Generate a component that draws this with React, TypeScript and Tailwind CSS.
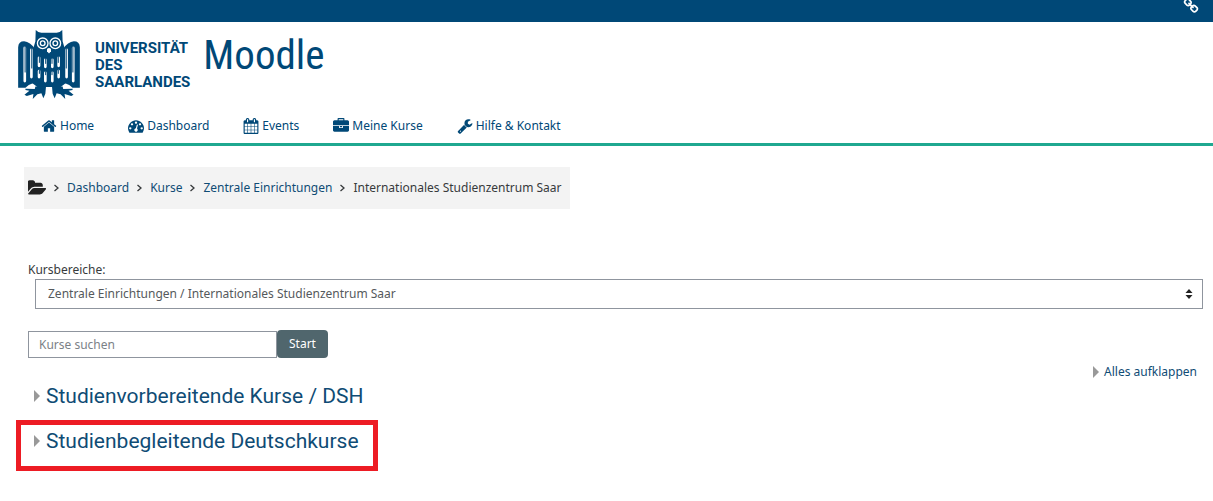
import { useState } from 'react';

const icons = {
  home: 'M1472 992v480q0 26-19 45t-45 19h-384v-384h-256v384h-384q-26 0-45-19t-19-45v-480q0-1 .5-3t.5-3l575-474 575 474q1 2 1 6zm223-69l-62 74q-8 9-21 11h-3q-13 0-21-7l-692-577-692 577q-12 8-24 7-13-2-21-11l-62-74q-8-10-7-23.5t11-21.5l719-599q32-26 76-26t76 26l244 204v-195q0-14 9-23t23-9h192q14 0 23 9t9 23v408l219 182q10 8 11 21.5t-7 23.5z',
  dashboard:
    'M384 1152q0-53-37.5-90.5t-90.5-37.5-90.5 37.5-37.5 90.5 37.5 90.5 90.5 37.5 90.5-37.5 37.5-90.5zm192-448q0-53-37.5-90.5t-90.5-37.5-90.5 37.5-37.5 90.5 37.5 90.5 90.5 37.5 90.5-37.5 37.5-90.5zm428 481l101-382q6-26-7.5-48.5t-38.5-29.5-48 6.5-30 39.5l-101 382q-60 5-107 43.5t-63 98.5q-20 77 20 146t117 89 146-20 89-117q16-60-6-117t-72-91zm660-33q0-53-37.5-90.5t-90.5-37.5-90.5 37.5-37.5 90.5 37.5 90.5 90.5 37.5 90.5-37.5 37.5-90.5zm-640-640q0-53-37.5-90.5t-90.5-37.5-90.5 37.5-37.5 90.5 37.5 90.5 90.5 37.5 90.5-37.5 37.5-90.5zm448 192q0-53-37.5-90.5t-90.5-37.5-90.5 37.5-37.5 90.5 37.5 90.5 90.5 37.5 90.5-37.5 37.5-90.5zm320 448q0 261-141 483-19 29-54 29h-1402q-35 0-54-29-141-221-141-483 0-182 71-348t191-286 286-191 348-71 348 71 286 191 191 286 71 348z',
  calendar:
    'M192 1664h288v-288h-288v288zm352 0h320v-288h-320v288zm-352-352h288v-320h-288v320zm352 0h320v-320h-320v320zm-352-384h288v-288h-288v288zm736 736h320v-288h-320v288zm-384-736h320v-288h-320v288zm768 736h288v-288h-288v288zm-384-352h320v-320h-320v320zm-352-864v-288q0-13-9.5-22.5t-22.5-9.5h-64q-13 0-22.5 9.5t-9.5 22.5v288q0 13 9.5 22.5t22.5 9.5h64q13 0 22.5-9.5t9.5-22.5zm736 864h288v-320h-288v320zm-384-384h320v-288h-320v288zm384 0h288v-288h-288v288zm32-480v-288q0-13-9.5-22.5t-22.5-9.5h-64q-13 0-22.5 9.5t-9.5 22.5v288q0 13 9.5 22.5t22.5 9.5h64q13 0 22.5-9.5t9.5-22.5zm384-64v1280q0 52-38 90t-90 38h-1408q-52 0-90-38t-38-90v-1280q0-52 38-90t90-38h128v-96q0-66 47-113t113-47h64q66 0 113 47t47 113v96h384v-96q0-66 47-113t113-47h64q66 0 113 47t47 113v96h128q52 0 90 38t38 90z',
  briefcase:
    'M640 256h512v-128h-512v128zm1152 640v480q0 66-47 113t-113 47h-1472q-66 0-113-47t-47-113v-480h672v160q0 26 19 45t45 19h320q26 0 45-19t19-45v-160h672zm-768 0v128h-256v-128h256zm768-480v384h-1792v-384q0-66 47-113t113-47h352v-160q0-40 28-68t68-28h576q40 0 68 28t28 68v160h352q66 0 113 47t47 113z',
  wrench:
    'M448 1472q0-26-19-45t-45-19-45 19-19 45 19 45 45 19 45-19 19-45zm644-420l-682 682q-37 37-90 37-52 0-91-37l-106-108q-38-36-38-90 0-53 38-91l681-681q39 98 114.5 173.5t173.5 114.5zm634-435q0 39-23 106-47 134-164.5 217.5t-258.5 83.5q-185 0-316.5-131.5t-131.5-316.5 131.5-316.5 316.5-131.5q58 0 121.5 16.5t107.5 46.5q16 11 16 28t-16 28l-293 169v224l193 107q5-3 79-48.5t135.5-81 70.5-35.5q15 0 23.5 10t8.5 25z',
  folder:
    'M1815 952q0 31-31 66l-336 396q-43 51-120.5 86.5t-143.5 35.5h-1088q-34 0-60.5-13t-26.5-43q0-31 31-66l336-396q43-51 120.5-86.5t143.5-35.5h1088q34 0 60.5 13t26.5 43zm-343-344v160h-832q-94 0-197 47.5t-164 119.5l-337 396-5 6q0-4-.5-12.5t-.5-12.5v-960q0-92 66-158t158-66h320q92 0 158 66t66 158v32h544q92 0 158 66t66 158z',
  link: 'M1520 1216q0-40-28-68l-208-208q-28-28-68-28-42 0-72 32 3 3 19 18.5t21.5 21.5 15 19 13 25.5 3.5 27.5q0 40-28 68t-68 28q-15 0-27.5-3.5t-25.5-13-19-15-21.5-21.5-18.5-19q-33 31-33 73 0 40 28 68l206 207q27 27 68 27 40 0 68-26l147-146q28-28 28-67zm-703-705q0-40-28-68l-206-207q-28-28-68-28-39 0-68 27l-147 146q-28 28-28 67 0 40 28 68l208 208q27 27 68 27 42 0 72-31-3-3-19-18.5t-21.5-21.5-15-19-13-25.5-3.5-27.5q0-40 28-68t68-28q15 0 27.5 3.5t25.5 13 19 15 21.5 21.5 18.5 19q33-31 33-73zm895 705q0 120-85 203l-147 146q-83 83-203 83-121 0-204-85l-206-207q-83-83-83-203 0-123 88-209l-88-88q-86 88-208 88-120 0-204-84l-208-208q-84-84-84-204t85-203l147-146q83-83 203-83 121 0 204 85l206 207q83 83 83 203 0 123-88 209l88 88q86-88 208-88 120 0 204 84l208 208q84 84 84 204z',
};

type IconName = keyof typeof icons;

const navItems: { label: string; icon: IconName }[] = [
  { label: 'Home', icon: 'home' },
  { label: 'Dashboard', icon: 'dashboard' },
  { label: 'Events', icon: 'calendar' },
  { label: 'Meine Kurse', icon: 'briefcase' },
  { label: 'Hilfe & Kontakt', icon: 'wrench' },
];

const breadcrumbs = ['Dashboard', 'Kurse', 'Zentrale Einrichtungen'];

const categories = [
  { name: 'Studienvorbereitende Kurse / DSH', highlighted: false },
  { name: 'Studienbegleitende Deutschkurse', highlighted: true },
];

function Icon({ name, className }: { name: IconName; className: string }) {
  return (
    <svg viewBox="0 0 1792 1792" fill="currentColor" aria-hidden="true" className={className}>
      <path d={icons[name]} />
    </svg>
  );
}

function Triangle({ className }: { className: string }) {
  return (
    <svg viewBox="0 0 6 12" fill="currentColor" aria-hidden="true" className={className}>
      <path d="M0 0L6 6L0 12z" />
    </svg>
  );
}

function Chevron() {
  return (
    <svg viewBox="0 0 5 8" fill="none" stroke="currentColor" strokeWidth="1.3" aria-hidden="true" className="h-2 w-[5px] text-[#373a3c]">
      <path d="M.5 1L4 4L.5 7" />
    </svg>
  );
}

function Owl() {
  return (
    <svg viewBox="24 18 186 208" aria-hidden="true" className="h-[69px] w-[62px] shrink-0">
      <g fill="#004877">
        <path d="M24 192V70Q25 52 42 52Q60 54 76 76L74 176L56 184L46 192z" />
        <path d="M210 192V70Q209 52 192 52Q174 54 158 76L160 176L178 184L188 192z" />
        <path d="M77 18Q84 26 94 26H140Q150 26 157 18L158 52L164 72L168 90V178L152 190H82L66 178V90L70 72L76 52z" />
        <path d="M76 188H108L106 210L100 224L94 209L82 212L68 226L70 211L50 217L43 213L58 201L46 199V195L74 196z" />
        <path d="M158 188H126L128 210L134 224L140 209L152 212L166 226L164 211L184 217L191 213L176 201L188 199V195L160 196z" />
      </g>
      <g fill="none" stroke="#fff" strokeWidth="4">
        <circle cx="98" cy="58" r="16" />
        <circle cx="136" cy="58" r="16" />
        <circle cx="98" cy="58" r="7" />
        <circle cx="136" cy="58" r="7" />
      </g>
      <path d="M111 75Q117 70 123 75V82L117 89L111 82z" fill="#fff" />
      <g fill="none" stroke="#fff" strokeWidth="8" strokeLinecap="round">
        <path d="M44 72V172M64 78V160M190 72V172M170 78V160" />
        <path d="M87 102V126M106 108V129M127 108V129M146 102V126" />
        <path d="M87 142V160M106 147V172M127 147V172M146 142V160" />
      </g>
      <g fill="none" stroke="#004877" strokeWidth="3">
        <path d="M45 66V146M65 72V134M189 66V146M169 72V134" />
        <path d="M88 96V117M107 102V120M126 102V120M145 96V117" />
        <path d="M88 138V150M107 142V154M126 142V154M145 138V150" />
      </g>
    </svg>
  );
}

function Header() {
  return (
    <header className="border-b-[3px] border-[#1fa890] text-[#004877]">
      <div className="flex h-[22px] items-start justify-end overflow-hidden bg-[#004877] pr-3.5 text-white">
        <a href="#" aria-label="Links" className="-mt-0.5">
          <Icon name="link" className="h-4 w-4" />
        </a>
      </div>
      <div className="flex items-start px-[18px] pt-2">
        <a href="#" className="flex items-start gap-[15px]">
          <Owl />
          <span className="pt-2.5 font-['Roboto',sans-serif] text-[15px] leading-[17px] font-bold">
            UNIVERSITÄT
            <br />
            DES
            <br />
            SAARLANDES
          </span>
        </a>
        <h1 className="ml-[13px] font-['Roboto_Condensed','Liberation_Sans_Narrow','Roboto',sans-serif] text-[41px] leading-[50px]">
          Moodle
        </h1>
      </div>
      <nav className="flex gap-[34px] px-[41px] pt-[17px] pb-[7px] leading-5">
        {navItems.map(item => (
          <a key={item.label} href="#" className="flex items-center gap-[3px] hover:underline">
            <Icon name={item.icon} className="h-4 w-4" />
            {item.label}
          </a>
        ))}
      </nav>
    </header>
  );
}

export default function App() {
  const [query, setQuery] = useState('');

  return (
    <div className="min-h-screen bg-white font-['Noto_Sans','Open_Sans',sans-serif] text-[12px] leading-5 text-[#373a3c]">
      <Header />

      <main className="px-6 pt-[21px]">
        <nav aria-label="Breadcrumb" className="flex h-[42px] w-fit items-center gap-2 bg-[#f3f3f3] pr-2 pl-1">
          <Icon name="folder" className="h-[18px] w-[18px] text-[#222]" />
          {breadcrumbs.map(crumb => (
            <span key={crumb} className="flex items-center gap-2">
              <Chevron />
              <a href="#" className="text-[#0f4c75] hover:underline">
                {crumb}
              </a>
            </span>
          ))}
          <Chevron />
          <span>Internationales Studienzentrum Saar</span>
        </nav>

        <div className="-mr-3.5 pt-[52px] pl-1">
          <label htmlFor="category" className="block leading-[18px]">
            Kursbereiche:
          </label>
          <div className="relative ml-[7px]">
            <select
              id="category"
              className="h-[30px] w-full appearance-none border border-[#8f959e] bg-white px-3 text-[#55595c]"
            >
              <option>Zentrale Einrichtungen / Internationales Studienzentrum Saar</option>
            </select>
            <svg
              viewBox="0 0 8 10"
              fill="#222"
              aria-hidden="true"
              className="pointer-events-none absolute top-2.5 right-2.5 h-2.5 w-2"
            >
              <path d="M4 0L7.5 4H.5zM4 10L.5 6H7.5z" />
            </svg>
          </div>
        </div>

        <form className="flex items-center pt-[21px] pl-1" onSubmit={e => e.preventDefault()}>
          <input
            type="text"
            aria-label="Kurse suchen"
            placeholder="Kurse suchen"
            value={query}
            onChange={e => setQuery(e.target.value)}
            className="h-[27px] w-[249px] border border-[#8f959e] px-2.5 placeholder:text-[#7b8187]"
          />
          <button type="submit" className="h-7 rounded bg-[#50666d] px-3 text-white">
            Start
          </button>
        </form>

        <div className="-mr-2 flex justify-end pt-1">
          <a href="#" className="flex items-center gap-[5px] text-[#0f4c75] hover:underline">
            <Triangle className="h-3 w-1.5 text-[#999]" />
            Alles aufklappen
          </a>
        </div>

        <div className="-mt-1 -ml-2 flex flex-col items-start gap-1.5">
          {categories.map(category => (
            <h3
              key={category.name}
              className={`border-[5px] pl-[13px] font-['Roboto',sans-serif] text-[21px] text-[#0f4c75] ${
                category.highlighted ? 'border-[#ed1c24] pt-[3px] pr-3.5 pb-3' : 'border-transparent'
              }`}
            >
              <a href="#" className="flex items-center gap-1.5 leading-[26px] hover:underline">
                <Triangle className="h-3 w-1.5 text-[#999]" />
                {category.name}
              </a>
            </h3>
          ))}
        </div>
      </main>
    </div>
  );
}
